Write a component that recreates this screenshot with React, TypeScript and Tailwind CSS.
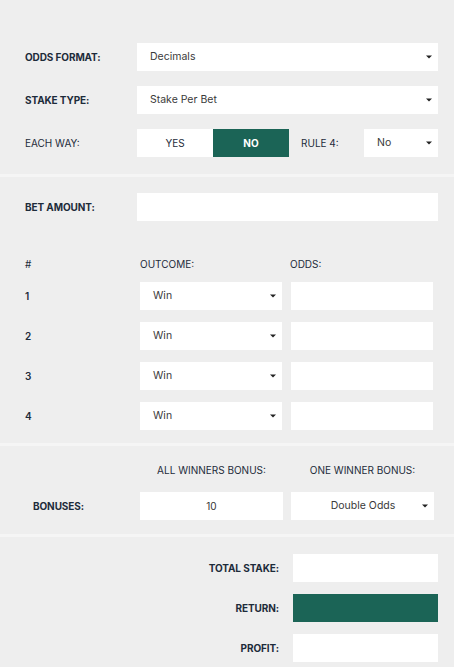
import React from "react";

const Caret = () => (
  <svg width="6" height="4" viewBox="0 0 6 4" className="shrink-0">
    <path d="M0 0.5 L6 0.5 L3 3.5 Z" fill="#222" />
  </svg>
);

const Select = ({ value, className = "", center = false }: { value: string; className?: string; center?: boolean }) => (
  <div className={`h-[28px] bg-white flex items-center pl-[13px] pr-[6px] ${className}`}>
    <span className={`flex-1 text-[10.5px] text-[#3a3a3a] ${center ? "text-center" : ""}`}>{value}</span>
    <Caret />
  </div>
);

const Label = ({ children, className = "" }: { children: React.ReactNode; className?: string }) => (
  <div className={`text-[10px] font-bold text-[#1d2b3a] tracking-[-0.1px] ${className}`}>{children}</div>
);

const Divider = () => <div className="h-[3px] bg-[#f5f5f5]" />;

export default function App() {
  return (
    <div className="w-[454px] h-[667px] bg-[#eeeeee] overflow-hidden" style={{ fontFamily: "Inter, 'Noto Sans', sans-serif" }}>
      <div className="pt-[43px] px-[25px] pr-[16px] pb-[17px] flex flex-col gap-[15px]">
        <div className="flex items-center">
          <Label className="w-[112px]">ODDS FORMAT:</Label>
          <Select value="Decimals" className="flex-1" />
        </div>
        <div className="flex items-center">
          <Label className="w-[112px]">STAKE TYPE:</Label>
          <Select value="Stake Per Bet" className="flex-1" />
        </div>
        <div className="flex items-center h-[28px]">
          <div className="w-[112px] text-[10px] text-[#1d2b3a]">EACH WAY:</div>
          <div className="w-[76px] h-[28px] bg-white flex items-center justify-center text-[10px] text-[#1d2b3a]">YES</div>
          <div className="w-[76px] h-[28px] bg-[#1b6456] flex items-center justify-center text-[10px] font-bold text-white">NO</div>
          <div className="w-[75px] pl-[12px] text-[10px] text-[#1d2b3a]">RULE 4:</div>
          <Select value="No" className="flex-1" />
        </div>
      </div>
      <Divider />
      <div className="pt-[16px] px-[25px] pr-[16px] flex items-center">
        <Label className="w-[112px]">BET AMOUNT:</Label>
        <div className="flex-1 h-[28px] bg-white" />
      </div>
      <div className="pt-[36px] pl-[25px] pr-[21px] pb-[13px]">
        <div className="flex items-center h-[14px] text-[10px] text-[#1d2b3a]">
          <div className="w-[115px]">#</div>
          <div className="w-[150px]">OUTCOME:</div>
          <div>ODDS:</div>
        </div>
        <div className="mt-[11px] flex flex-col gap-[12px]">
          {["1", "2", "3", "4"].map((n) => (
            <div key={n} className="flex items-center">
              <div className="w-[115px] text-[10px] font-semibold text-[#1d2b3a]">{n}</div>
              <Select value="Win" className="w-[142px]" />
              <div className="w-[9px]" />
              <div className="flex-1 h-[28px] bg-white" />
            </div>
          ))}
        </div>
      </div>
      <Divider />
      <div className="pt-[17px] pl-[33px] pr-[20px] pb-[14px]">
        <div className="flex items-center h-[14px] text-[10px] text-[#1d2b3a]">
          <div className="w-[107px]" />
          <div className="w-[143px] text-center">ALL WINNERS BONUS:</div>
          <div className="w-[8px]" />
          <div className="flex-1 text-center">ONE WINNER BONUS:</div>
        </div>
        <div className="mt-[15px] flex items-center">
          <Label className="w-[107px]">BONUSES:</Label>
          <div className="w-[143px] h-[28px] bg-white flex items-center justify-center text-[10px] text-[#333]">10</div>
          <div className="w-[8px]" />
          <Select value="Double Odds" center className="flex-1" />
        </div>
      </div>
      <Divider />
      <div className="pt-[17px] pr-[16px] flex flex-col gap-[12px]">
        {[
          ["TOTAL STAKE:", "bg-white"],
          ["RETURN:", "bg-[#1b6456]"],
          ["PROFIT:", "bg-white"],
        ].map(([l, bg]) => (
          <div key={l} className="flex items-center justify-end">
            <Label className="text-right">{l}</Label>
            <div className={`ml-[14px] w-[145px] h-[28px] ${bg}`} />
          </div>
        ))}
      </div>
    </div>
  );
}
